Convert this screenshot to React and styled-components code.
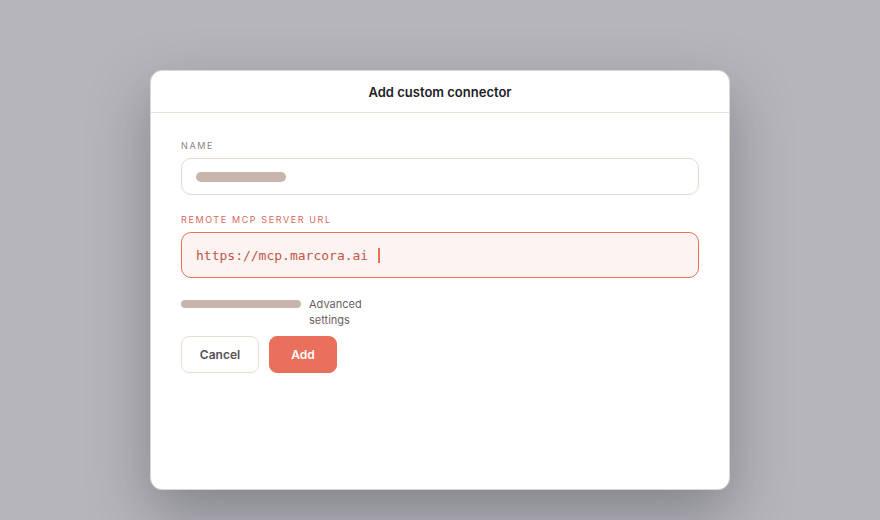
import styled, { createGlobalStyle } from "styled-components"

const Global = createGlobalStyle`
  html, body {
    margin: 0;
    padding: 0;
    background: #b5b5ba;
    font-family: Inter, "Noto Sans", sans-serif;
  }
`

const Page = styled.div`
  width: 880px;
  height: 520px;
  display: flex;
  justify-content: center;
  padding-top: 70px;
  box-sizing: border-box;
  background: #b5b5ba;
`

const Modal = styled.div`
  width: 580px;
  height: 420px;
  box-sizing: border-box;
  background: #fff;
  border: 1px solid #d9d6d6;
  border-radius: 12px;
  box-shadow: 0 24px 60px rgba(40, 40, 55, 0.35);
  display: flex;
  flex-direction: column;
`

const Header = styled.div`
  height: 41px;
  flex-shrink: 0;
  display: flex;
  align-items: center;
  justify-content: center;
  border-bottom: 1px solid #f1e0da;
  font-size: 13px;
  font-weight: 600;
  color: #1d1d26;
`

const Body = styled.div`
  padding: 27px 30px 0 30px;
  display: flex;
  flex-direction: column;
`

const Label = styled.div`
  font-size: 9px;
  letter-spacing: 1.6px;
  text-transform: uppercase;
  color: ${(p) => (p.$error ? "#d9675a" : "#8a8487")};
  margin-bottom: 6px;
  line-height: 12px;
`

const Field = styled.div`
  box-sizing: border-box;
  height: ${(p) => p.$h}px;
  border-radius: 10px;
  border: 1px solid ${(p) => (p.$error ? "#e8705c" : "#e7d8d1")};
  background: ${(p) => (p.$error ? "#fdf3f1" : "#fff")};
  display: flex;
  align-items: center;
  padding: 0 14px;
  margin-bottom: ${(p) => p.$mb || 0}px;
`

const Placeholder = styled.div`
  width: ${(p) => p.$w}px;
  height: ${(p) => p.$hh}px;
  margin-top: ${(p) => p.$mt || 0}px;
  border-radius: 6px;
  background: #c8b5ad;
  flex-shrink: 0;
`

const Mono = styled.span`
  font-family: "DejaVu Sans Mono", "Liberation Mono", monospace;
  font-size: 13px;
  color: #c4564a;
`

const Caret = styled.span`
  display: inline-block;
  width: 2px;
  height: 15px;
  background: #e8705c;
  margin-left: 10px;
`

const AdvancedRow = styled.div`
  display: flex;
  align-items: flex-start;
  gap: 8px;
  margin-top: 18px;
`

const AdvancedText = styled.div`
  width: 64px;
  font-size: 11px;
  line-height: 16px;
  color: #6a6266;
`

const Buttons = styled.div`
  display: flex;
  gap: 10px;
  margin-top: 8px;
`

const Button = styled.button`
  height: 37px;
  width: ${(p) => p.$w}px;
  border-radius: 8px;
  font-family: Inter, "Noto Sans", sans-serif;
  font-size: 12px;
  font-weight: 600;
  cursor: pointer;
  border: 1px solid ${(p) => (p.$primary ? "#e8705c" : "#ecdcd5")};
  background: ${(p) => (p.$primary ? "#e8705c" : "#fff")};
  color: ${(p) => (p.$primary ? "#fff" : "#5b5055")};
`

export default function App() {
  return (
    <>
      <Global />
      <Page>
        <Modal>
          <Header>Add custom connector</Header>
          <Body>
            <Label>Name</Label>
            <Field $h={37} $mb={19}>
              <Placeholder $w={90} $hh={10} />
            </Field>
            <Label $error>Remote MCP server URL</Label>
            <Field $h={46} $error>
              <Mono>https://mcp.marcora.ai</Mono>
              <Caret />
            </Field>
            <AdvancedRow>
              <Placeholder $w={120} $hh={8} $mt={4} />
              <AdvancedText>Advanced settings</AdvancedText>
            </AdvancedRow>
            <Buttons>
              <Button $w={78}>Cancel</Button>
              <Button $w={68} $primary>
                Add
              </Button>
            </Buttons>
          </Body>
        </Modal>
      </Page>
    </>
  )
}
